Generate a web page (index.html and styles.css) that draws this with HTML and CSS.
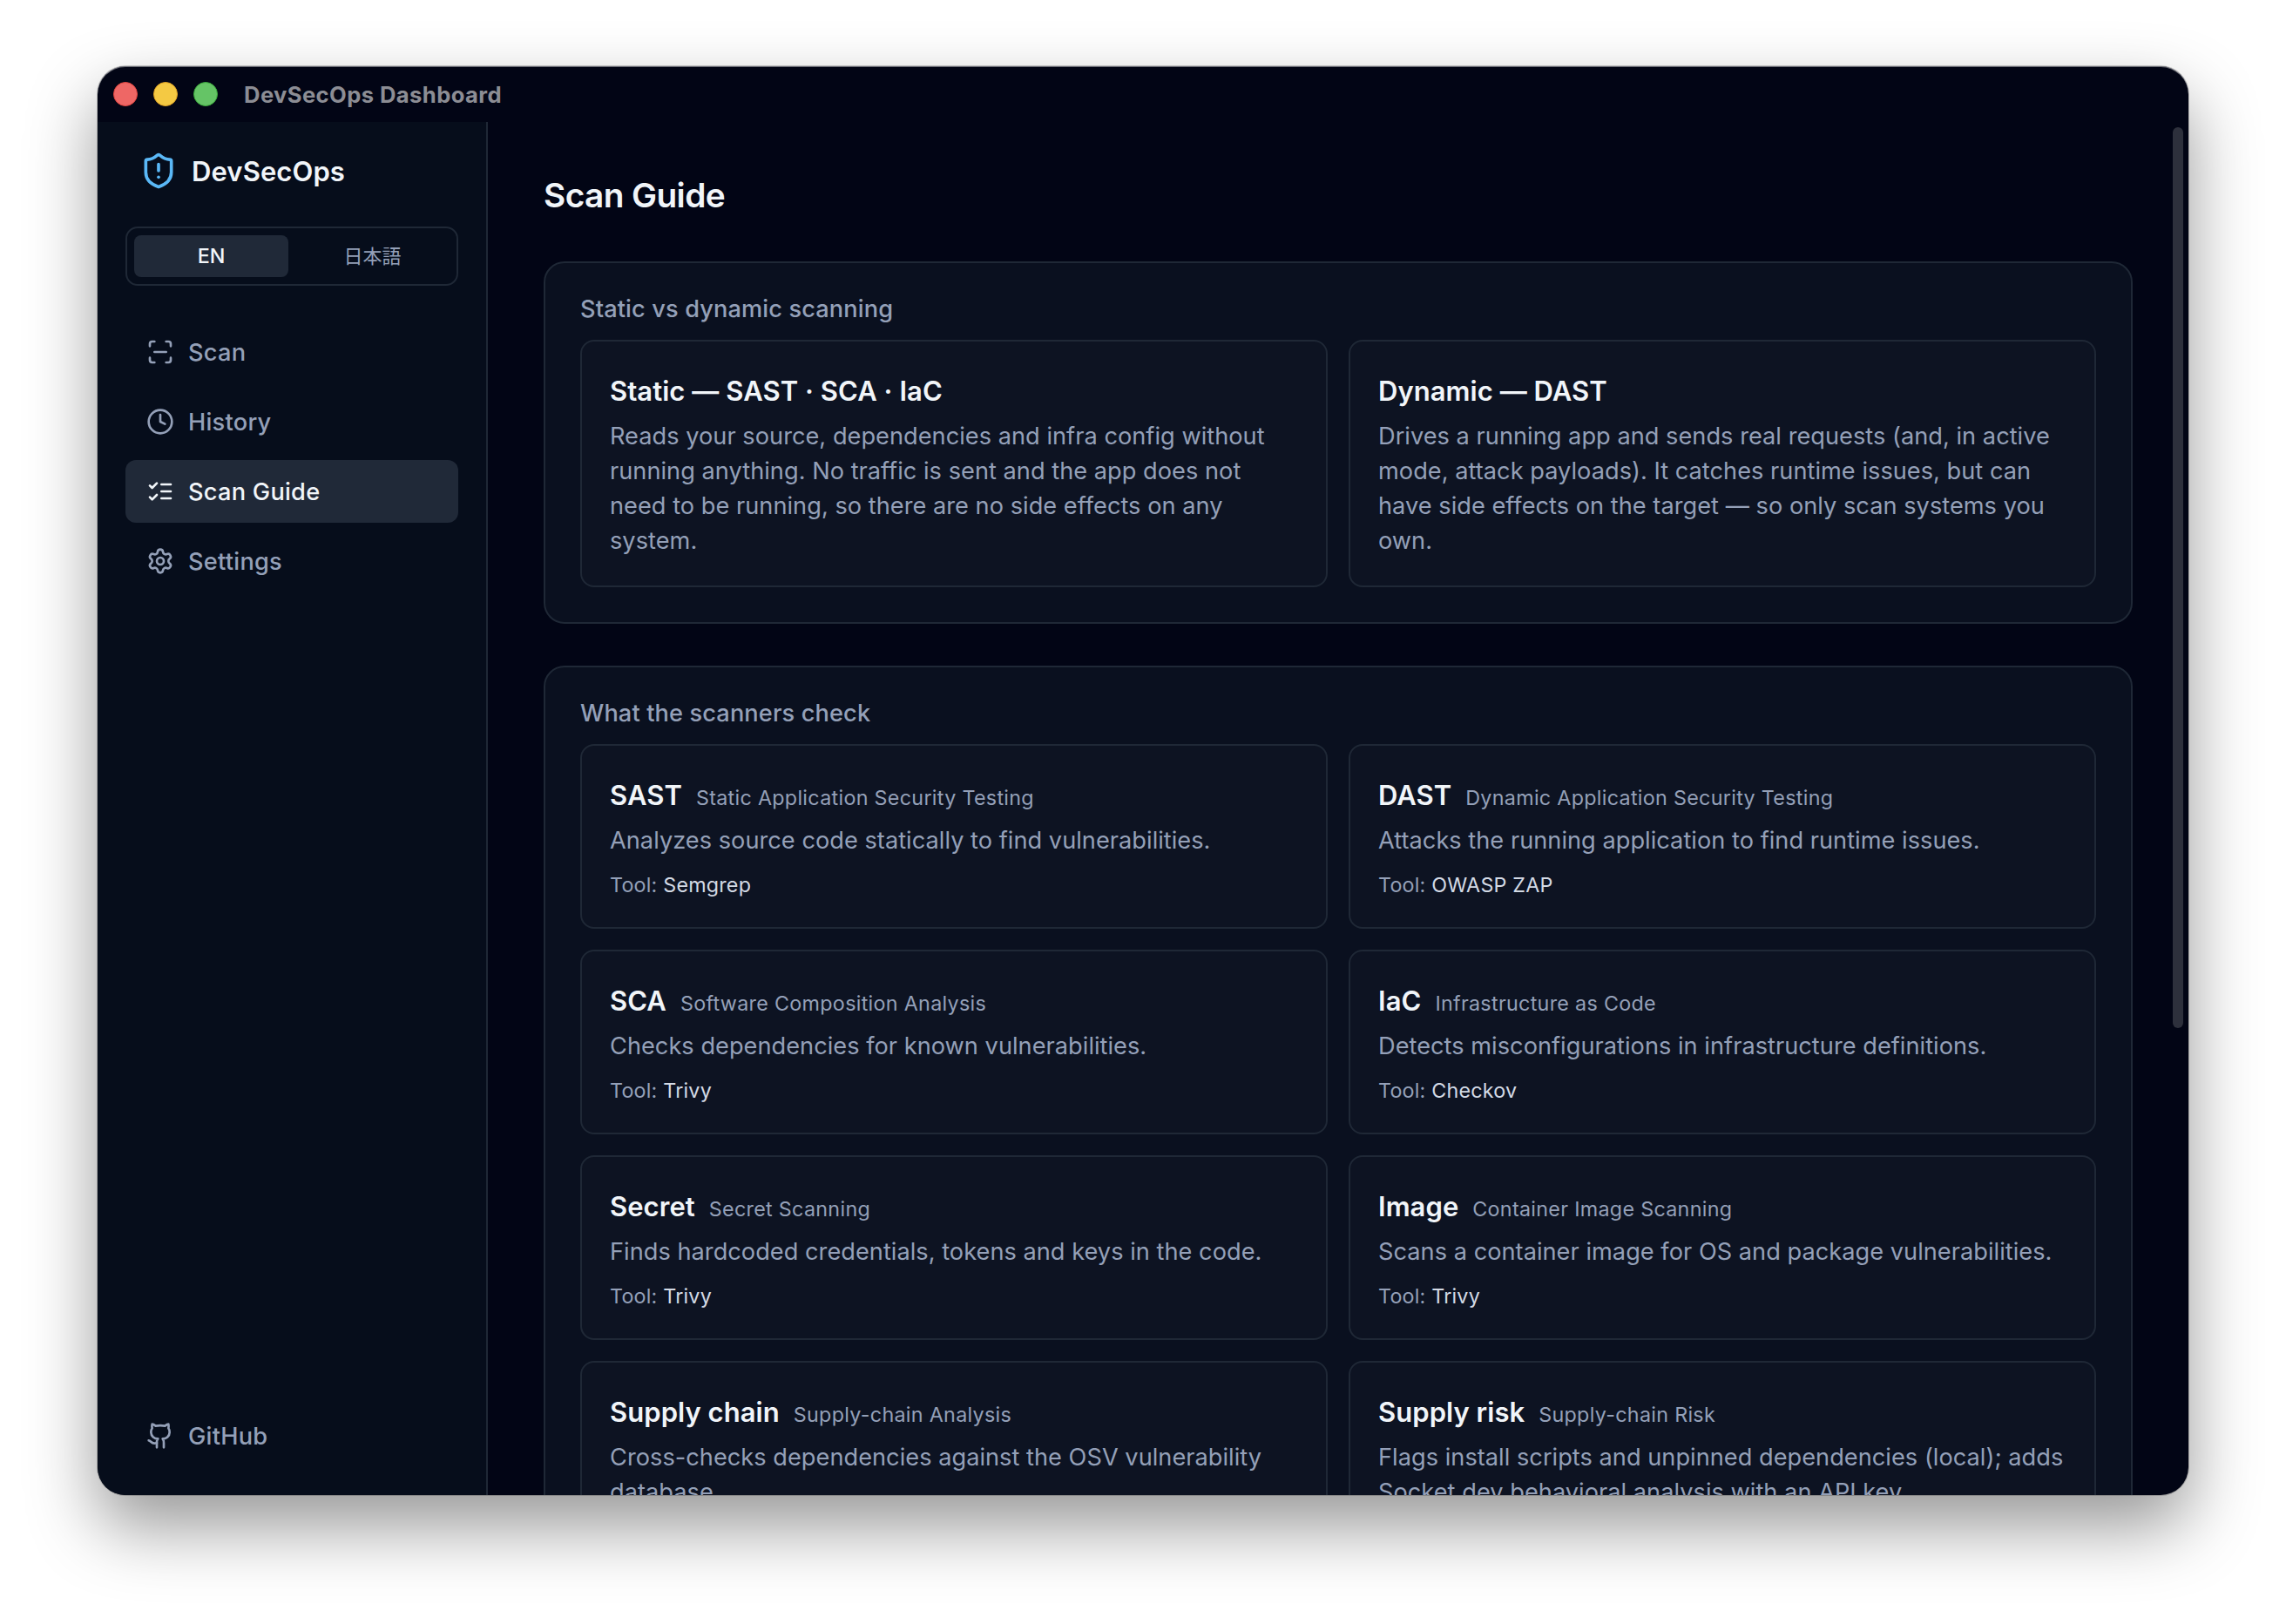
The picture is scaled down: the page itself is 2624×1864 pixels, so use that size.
FILE: index.html
```html
<!DOCTYPE html>
<html lang="en">
<head>
    <meta charset="UTF-8">
    <meta name="viewport" content="width=device-width, initial-scale=1.0">
    <title>DevSecOps Dashboard</title>
    <link rel="stylesheet" href="styles.css">
</head>
<body>
    <div class="window">
        <header class="titlebar">
            <span class="light red"></span>
            <span class="light yellow"></span>
            <span class="light green"></span>
            <span class="titlebar-text">DevSecOps Dashboard</span>
        </header>
        <div class="app">
            <aside class="sidebar">
                <div class="brand">
                    <svg class="brand-icon" viewBox="0 0 24 24">
                        <path d="M20 13c0 5-3.5 7.5-7.66 8.95a1 1 0 0 1-.67-.01C7.5 20.5 4 18 4 13V6a1 1 0 0 1 1-1c2 0 4.5-1.2 6.24-2.72a1.17 1.17 0 0 1 1.52 0C14.51 3.81 17 5 19 5a1 1 0 0 1 1 1z"/>
                        <path d="M12 8v4"/>
                        <path d="M12 16h.01"/>
                    </svg>
                    <span>DevSecOps</span>
                </div>
                <div class="lang">
                    <button class="lang-btn active">EN</button>
                    <button class="lang-btn" lang="ja">日本語</button>
                </div>
                <nav class="nav">
                    <a class="nav-item">
                        <svg viewBox="0 0 24 24">
                            <path d="M3 7V5a2 2 0 0 1 2-2h2"/>
                            <path d="M17 3h2a2 2 0 0 1 2 2v2"/>
                            <path d="M21 17v2a2 2 0 0 1-2 2h-2"/>
                            <path d="M7 21H5a2 2 0 0 1-2-2v-2"/>
                            <path d="M7 12h10"/>
                        </svg>
                        Scan
                    </a>
                    <a class="nav-item">
                        <svg viewBox="0 0 24 24">
                            <circle cx="12" cy="12" r="10"/>
                            <path d="M12 6v6l4 2"/>
                        </svg>
                        History
                    </a>
                    <a class="nav-item active">
                        <svg viewBox="0 0 24 24">
                            <path d="m3 17 2 2 4-4"/>
                            <path d="m3 7 2 2 4-4"/>
                            <path d="M13 6h8"/>
                            <path d="M13 12h8"/>
                            <path d="M13 18h8"/>
                        </svg>
                        Scan Guide
                    </a>
                    <a class="nav-item">
                        <svg viewBox="0 0 24 24">
                            <path d="M9.671 4.136a2.34 2.34 0 0 1 4.659 0 2.34 2.34 0 0 0 3.319 1.915 2.34 2.34 0 0 1 2.33 4.033 2.34 2.34 0 0 0 0 3.831 2.34 2.34 0 0 1-2.33 4.033 2.34 2.34 0 0 0-3.319 1.915 2.34 2.34 0 0 1-4.659 0 2.34 2.34 0 0 0-3.32-1.915 2.34 2.34 0 0 1-2.33-4.033 2.34 2.34 0 0 0 0-3.831A2.34 2.34 0 0 1 6.35 6.051a2.34 2.34 0 0 0 3.319-1.915"/>
                            <circle cx="12" cy="12" r="3"/>
                        </svg>
                        Settings
                    </a>
                </nav>
                <a class="nav-item github">
                    <svg viewBox="0 0 24 24">
                        <path d="M15 22v-4a4.8 4.8 0 0 0-1-3.5c3 0 6-2 6-5.5.08-1.25-.27-2.48-1-3.5.28-1.15.28-2.35 0-3.5 0 0-1 0-3 1.5-2.64-.5-5.36-.5-8 0C6 2 5 2 5 2c-.3 1.15-.3 2.35 0 3.5A5.403 5.403 0 0 0 4 9c0 3.5 3 5.5 6 5.5-.39.49-.68 1.05-.85 1.65-.17.6-.22 1.23-.15 1.85v4"/>
                        <path d="M9 18c-4.51 2-5-2-7-2"/>
                    </svg>
                    GitHub
                </a>
            </aside>
            <main class="main">
                <h1>Scan Guide</h1>

                <section class="panel">
                    <h2>Static vs dynamic scanning</h2>
                    <div class="grid">
                        <div class="card">
                            <h3>Static — SAST · SCA · IaC</h3>
                            <p>Reads your source, dependencies and infra config without running anything. No traffic is sent and the app does not need to be running, so there are no side effects on any system.</p>
                        </div>
                        <div class="card">
                            <h3>Dynamic — DAST</h3>
                            <p>Drives a running app and sends real requests (and, in active mode, attack payloads). It catches runtime issues, but can have side effects on the target — so only scan systems you own.</p>
                        </div>
                    </div>
                </section>

                <section class="panel">
                    <h2>What the scanners check</h2>
                    <div class="grid">
                        <div class="card">
                            <h3>SAST <small>Static Application Security Testing</small></h3>
                            <p>Analyzes source code statically to find vulnerabilities.</p>
                            <div class="tool">Tool: <span>Semgrep</span></div>
                        </div>
                        <div class="card">
                            <h3>DAST <small>Dynamic Application Security Testing</small></h3>
                            <p>Attacks the running application to find runtime issues.</p>
                            <div class="tool">Tool: <span>OWASP ZAP</span></div>
                        </div>
                        <div class="card">
                            <h3>SCA <small>Software Composition Analysis</small></h3>
                            <p>Checks dependencies for known vulnerabilities.</p>
                            <div class="tool">Tool: <span>Trivy</span></div>
                        </div>
                        <div class="card">
                            <h3>IaC <small>Infrastructure as Code</small></h3>
                            <p>Detects misconfigurations in infrastructure definitions.</p>
                            <div class="tool">Tool: <span>Checkov</span></div>
                        </div>
                        <div class="card">
                            <h3>Secret <small>Secret Scanning</small></h3>
                            <p>Finds hardcoded credentials, tokens and keys in the code.</p>
                            <div class="tool">Tool: <span>Trivy</span></div>
                        </div>
                        <div class="card">
                            <h3>Image <small>Container Image Scanning</small></h3>
                            <p>Scans a container image for OS and package vulnerabilities.</p>
                            <div class="tool">Tool: <span>Trivy</span></div>
                        </div>
                        <div class="card">
                            <h3>Supply chain <small>Supply-chain Analysis</small></h3>
                            <p>Cross-checks dependencies against the OSV vulnerability database.</p>
                        </div>
                        <div class="card">
                            <h3>Supply risk <small>Supply-chain Risk</small></h3>
                            <p>Flags install scripts and unpinned dependencies (local); adds Socket.dev behavioral analysis with an API key.</p>
                        </div>
                    </div>
                </section>
                <div class="scrollbar"></div>
            </main>
        </div>
    </div>
</body>
</html>
```
FILE: styles.css
```css
* {
    box-sizing: border-box;
}
body {
    margin: 0;
    height: 1864px;
    padding: 76px 112px 148px;
    background: #ffffff;
    font-family: Inter, "Noto Sans CJK JP", sans-serif;
    color: #f1f5f9;
    overflow: hidden;
}
h1, h2, h3, p {
    margin: 0;
}
svg {
    fill: none;
    stroke: currentColor;
    stroke-width: 2;
    stroke-linecap: round;
    stroke-linejoin: round;
    flex-shrink: 0;
}

/* window */
.window {
    height: 1640px;
    display: flex;
    flex-direction: column;
    background: #020515;
    border-radius: 32px;
    overflow: hidden;
    box-shadow: inset 0 1px 0 rgba(255, 255, 255, 0.4), 0 0 0 1px rgba(0, 0, 0, 0.2), 0 36px 80px rgba(0, 0, 0, 0.41);
}
.titlebar {
    height: 64px;
    flex-shrink: 0;
    display: flex;
    align-items: center;
    gap: 18px;
    padding-left: 18px;
}
.light {
    width: 28px;
    height: 28px;
    border-radius: 50%;
}
.red {
    background: #ee6765;
    border: 1px solid #e0443e;
}
.yellow {
    background: #f4c943;
    border: 1px solid #dea123;
}
.green {
    background: #65c466;
    border: 1px solid #3aa83a;
}
.titlebar-text {
    margin-left: 12px;
    padding-top: 1px;
    font-size: 25.6px;
    font-weight: 700;
    letter-spacing: 0.4px;
    color: #8c8d94;
}
.app {
    flex: 1;
    min-height: 0;
    display: flex;
}

/* sidebar */
.sidebar {
    width: 448px;
    flex-shrink: 0;
    display: flex;
    flex-direction: column;
    padding: 32px;
    background: #060d1b;
    border-right: 2px solid #1f2836;
}
.brand {
    height: 48px;
    display: flex;
    align-items: center;
    gap: 16px;
    padding-left: 16px;
    margin-bottom: 40px;
    font-size: 31px;
    font-weight: 600;
    letter-spacing: 0.1px;
}
.brand-icon {
    width: 44px;
    height: 44px;
    color: #5ab8f7;
}
.lang {
    height: 68px;
    display: flex;
    gap: 8px;
    padding: 8px;
    border: 2px solid #1f2836;
    border-radius: 14px;
    margin-bottom: 40px;
}
.lang-btn {
    flex: 1;
    padding: 0;
    border: none;
    border-radius: 8px;
    background: none;
    font-family: inherit;
    font-size: 23.3px;
    font-weight: 500;
    line-height: 46px;
    color: #94a0b8;
}
.lang-btn:lang(ja) {
    font-size: 22px;
    font-weight: 400;
}
.lang-btn.active {
    background: #202938;
    color: #f1f5f9;
}
.nav {
    display: flex;
    flex-direction: column;
    gap: 8px;
}
.nav-item {
    height: 72px;
    display: flex;
    align-items: center;
    gap: 16px;
    padding: 0 24px;
    border-radius: 12px;
    font-size: 27.2px;
    font-weight: 500;
    letter-spacing: 0.25px;
    color: #94a0b8;
}
.nav-item svg {
    width: 32px;
    height: 32px;
}
.nav-item.active {
    background: #202938;
    color: #f1f5f9;
}
.github {
    margin-top: auto;
}

/* main */
.main {
    flex: 1;
    min-width: 0;
    position: relative;
    padding: 56px 64px;
    overflow: hidden;
}
h1 {
    margin-bottom: 48px;
    font-size: 38.8px;
    font-weight: 600;
    line-height: 56px;
    letter-spacing: -0.6px;
}
.panel {
    margin-bottom: 48px;
    padding: 33px 40px 40px;
    background: #0a101f;
    border: 2px solid #1f2836;
    border-radius: 24px;
}
h2 {
    margin-bottom: 15px;
    font-size: 27.2px;
    font-weight: 500;
    line-height: 40px;
    letter-spacing: 0.12px;
    color: #94a0b8;
}
.grid {
    display: grid;
    grid-template-columns: 1fr 1fr;
    gap: 24px;
}
.card {
    padding: 33px 32px 31px;
    background: #0d1322;
    border: 2px solid #1f2836;
    border-radius: 16px;
}
h3 {
    display: flex;
    align-items: baseline;
    gap: 16px;
    height: 48px;
    margin-bottom: 8px;
    font-size: 31px;
    font-weight: 600;
    line-height: 48px;
    letter-spacing: 0.05px;
}
h3 small {
    font-size: 23.3px;
    font-weight: 400;
    letter-spacing: 0.3px;
    color: #94a0b8;
}
.card p {
    font-size: 27.2px;
    line-height: 40px;
    letter-spacing: 0.02px;
    color: #94a0b8;
}
.tool {
    margin: 15px 0 1px;
    font-size: 23.3px;
    line-height: 32px;
    letter-spacing: 0.2px;
    color: #94a0b8;
}
.tool span {
    color: #d3dae5;
}
.scrollbar {
    position: absolute;
    top: 6px;
    right: 6px;
    width: 12px;
    height: 1034px;
    border-radius: 6px;
    background: #2d303c;
}
```
